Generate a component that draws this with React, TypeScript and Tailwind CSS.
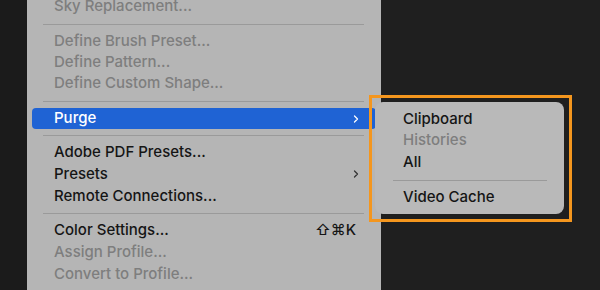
import { ChevronRight } from "lucide-react";

type Item =
  | { kind: "sep"; h: string }
  | { kind: "item"; label: string; h: string; disabled?: boolean; active?: boolean; sub?: boolean; shortcut?: string };

const items: Item[] = [
  { kind: "item", label: "Sky Replacement...", h: "h-[21px]", disabled: true },
  { kind: "sep", h: "h-[14px]" },
  { kind: "item", label: "Define Brush Preset...", h: "h-[21px]", disabled: true },
  { kind: "item", label: "Define Pattern...", h: "h-[21px]", disabled: true },
  { kind: "item", label: "Define Custom Shape...", h: "h-[21px]", disabled: true },
  { kind: "sep", h: "h-[14px]" },
  { kind: "item", label: "Purge", h: "h-[21px]", active: true, sub: true },
  { kind: "sep", h: "h-[12px]" },
  { kind: "item", label: "Adobe PDF Presets...", h: "h-[22px]" },
  { kind: "item", label: "Presets", h: "h-[22px]", sub: true },
  { kind: "item", label: "Remote Connections...", h: "h-[22px]" },
  { kind: "sep", h: "h-[12px]" },
  { kind: "item", label: "Color Settings...", h: "h-[22px]", shortcut: "⇧⌘K" },
  { kind: "item", label: "Assign Profile...", h: "h-[22px]", disabled: true },
  { kind: "item", label: "Convert to Profile...", h: "h-[22px]", disabled: true },
];

const MenuRow = ({ item }: { item: Item }) => {
  if (item.kind === "sep") {
    return (
      <div className={`${item.h} flex items-center pl-[16px] pr-[17px]`}>
        <div className="h-px w-full bg-[#9a9a9a]" />
      </div>
    );
  }
  const color = item.active ? "text-white" : item.disabled ? "text-[#7e7e7e]" : "text-[#151515]";
  return (
    <div
      className={`${item.h} mx-[5px] flex items-center rounded-[4px] pl-[22px] pr-[14px] ${color} ${
        item.active ? "bg-[#1f63d4]" : ""
      }`}
    >
      <span className="flex-1">{item.label}</span>
      {item.sub && <ChevronRight size={12} strokeWidth={2.5} className={item.active ? "text-white" : "text-[#333]"} />}
      {item.shortcut && <span className="pr-[6px] text-[#151515]">{item.shortcut}</span>}
    </div>
  );
};

const SubRow = ({ label, h, disabled }: { label: string; h: string; disabled?: boolean }) => (
  <div className={`${h} flex items-center pl-[28px] ${disabled ? "text-[#7e7e7e]" : "text-[#151515]"}`}>{label}</div>
);

export default function App() {
  return (
    <div
      className="relative flex h-[290px] w-[600px] overflow-hidden bg-[#1f1f1f] text-[15px] font-medium"
      style={{ fontFamily: "Inter, 'Noto Sans', sans-serif" }}
    >
      <div className="w-[27px] bg-[#1b1b1b]" />
      <div className="w-[354px] bg-[#b5b5b5]">
        <div className="-mt-[4px] flex flex-col">
          {items.map((it, i) => (
            <MenuRow key={i} item={it} />
          ))}
        </div>
      </div>

      <div className="absolute left-[375px] top-[102px] w-[189px] rounded-[8px] bg-[#b9b9b9] pt-[6px]">
        <SubRow label="Clipboard" h="h-[22px]" />
        <SubRow label="Histories" h="h-[21px]" disabled />
        <SubRow label="All" h="h-[22px]" />
        <div className="flex h-[14px] items-center pl-[18px] pr-[17px]">
          <div className="h-px w-full bg-[#9a9a9a]" />
        </div>
        <SubRow label="Video Cache" h="h-[20px]" />
        <div className="h-[7px]" />
      </div>

      <div className="absolute left-[369px] top-[95px] h-[127px] w-[203px] border-[3px] border-[#f4961e]" />
    </div>
  );
}
